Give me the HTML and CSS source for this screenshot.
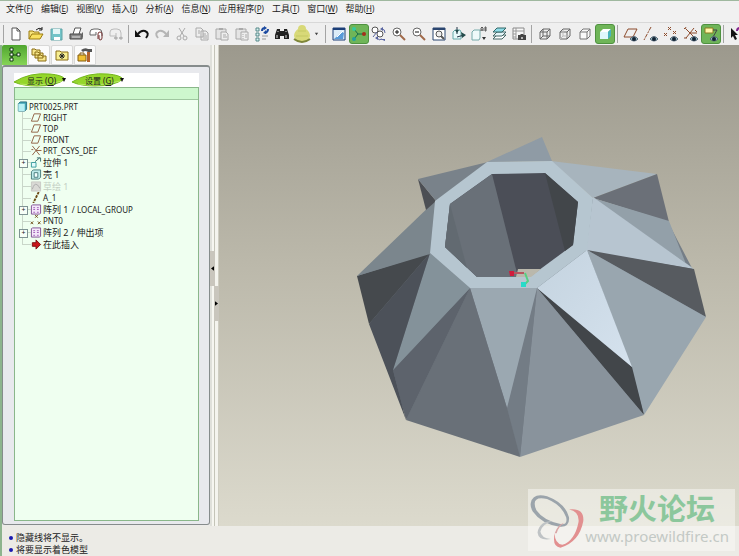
FILE: index.html
```html
<!DOCTYPE html>
<html lang="zh-CN">
<head>
  <meta charset="UTF-8">
  <meta name="viewport" content="width=device-width, initial-scale=1">
  <title>PRT0025</title>
  <link rel="stylesheet" href="styles.css">
</head>
<body>
  <nav class="menubar">
    <button>文件<span>(<u>F</u>)</span></button>
    <button>编辑<span>(<u>E</u>)</span></button>
    <button>视图<span>(<u>V</u>)</span></button>
    <button>插入<span>(<u>I</u>)</span></button>
    <button>分析<span>(<u>A</u>)</span></button>
    <button>信息<span>(<u>N</u>)</span></button>
    <button>应用程序<span>(<u>P</u>)</span></button>
    <button>工具<span>(<u>T</u>)</span></button>
    <button>窗口<span>(<u>W</u>)</span></button>
    <button>帮助<span>(<u>H</u>)</span></button>
  </nav>

  <div class="toolbar">
    <div class="group">
      <button class="tool" aria-label="新建"><svg viewBox="0 0 16 16"><path d="M4 2h5l3 3v9H4z" fill="#fff" stroke="#555"/><path d="M9 2v3h3" fill="none" stroke="#555"/></svg></button>
      <button class="tool" aria-label="打开"><svg viewBox="0 0 16 16"><path d="M1 13V5h4l1 1h5v2" fill="#f5e27a" stroke="#9a7a10"/><path d="M1 13l3-5h11l-3 5z" fill="#f8e060" stroke="#9a7a10"/><path d="M8 4q3-3 6-1m0-2v3h-3" fill="none" stroke="#222"/></svg></button>
      <button class="tool" aria-label="保存"><svg viewBox="0 0 16 16"><path d="M3 3h11v11H3z" fill="#72c4c8" stroke="#62a5a8"/><path d="M5 3h7v5H5z" fill="#e4f6f6"/><path d="M6 11h6v3H6z" fill="#fff"/></svg></button>
      <button class="tool" aria-label="打印"><svg viewBox="0 0 16 16"><path d="M5 8l2-6h6l-2 6" fill="#fff" stroke="#555"/><path d="M2 8h11l1 1v4H2z" fill="#888" stroke="#444"/><path d="M4 11h8" stroke="#ddd"/><path d="M13 8l2-2v5l-2 2" fill="#666"/></svg></button>
      <button class="tool" aria-label="发送附件"><svg viewBox="0 0 16 16"><path d="M2 9V6q0-3 4-3h4q4 0 4 4v3M2 9h6V6" fill="#fff" stroke="#666"/><path d="M10 13V8q0-2 2-2t2 2v4q0 2-2 2-1 0-1-2V9" fill="none" stroke="#733"/></svg></button>
      <button class="tool" aria-label="发送链接"><svg viewBox="0 0 16 16"><path d="M2 10V6q0-3 4-3h3q4 0 4 4v3M2 10h6V7" fill="none" stroke="#bbb"/><path d="M6 12h3m2 0h3M7 11h2v2H7zM12 11h2v2h-2z" fill="none" stroke="#aaa"/></svg></button>
    </div>
    <div class="group">
      <button class="tool" aria-label="撤消"><svg viewBox="0 0 16 16"><path d="M4 8q3-4 7-3 5 2 1 7" fill="none" stroke="#111" stroke-width="2"/><path d="M1 4v7h6z" fill="#111"/></svg></button>
      <button class="tool" aria-label="重做"><svg viewBox="0 0 16 16"><path d="M12 8Q9 4 5 5q-5 2-1 7" fill="none" stroke="#b5b5b5" stroke-width="2"/><path d="M15 4v7H9z" fill="#b5b5b5"/></svg></button>
      <button class="tool" aria-label="剪切"><svg viewBox="0 0 16 16"><path d="M5 2l5 8M11 2l-5 8" stroke="#aaa" fill="none"/><circle cx="5" cy="12" r="2" fill="none" stroke="#aaa"/><circle cx="11" cy="12" r="2" fill="none" stroke="#aaa"/></svg></button>
      <button class="tool" aria-label="复制"><svg viewBox="0 0 16 16"><path d="M2 2h5l2 2v7H2zM7 5h5l2 2v7H7z" fill="#eee" stroke="#aaa"/><path d="M9 8h3m-3 2h4m-4 2h4M4 5h2M4 7h2" stroke="#aaa"/></svg></button>
      <button class="tool" aria-label="粘贴"><svg viewBox="0 0 16 16"><path d="M2 3h10v10H2z" fill="#e4e4e4" stroke="#aaa"/><path d="M5 2h4v2H5z" fill="#aaa"/><path d="M7 6h5l2 2v6H7z" fill="#eee" stroke="#aaa"/><path d="M9 9h3m-3 2h4" stroke="#aaa"/></svg></button>
      <button class="tool" aria-label="选择性粘贴"><svg viewBox="0 0 16 16"><path d="M2 3h10v10H2z" fill="#e4e4e4" stroke="#aaa"/><path d="M5 2h4v2H5z" fill="#aaa"/><path d="M7 6h7v8H7z" fill="#eee" stroke="#aaa"/><path d="M9 8v1m0 1v1m0 1v1m2-4h2m-2 2h2" stroke="#aaa"/></svg></button>
      <button class="tool" aria-label="再生"><svg viewBox="0 0 16 16"><path d="M2 2h3v3H2zM2 7h3v3H2zM2 12h3v3H2z" fill="#d8f0f0" stroke="#588"/><path d="M8 5q0-3 3-3M14 3q0 3-3 4" fill="none" stroke="#1b49a0" stroke-width="2"/><path d="M10 0l3 2-3 2zM12 4l-3 3 3 1z" fill="#1b49a0"/><path d="M8 10h6m-6 3h4" stroke="#999"/></svg></button>
      <button class="tool" aria-label="查找"><svg viewBox="0 0 16 16"><path d="M3 3h3v2h4V3h3l2 6v4h-5v-3H6v3H1V9z" fill="#222"/><path d="M3 9v3m9-3v3M4 5v1m8-1v1" stroke="#ddd"/></svg></button>
      <button class="tool" aria-label="选择过滤"><svg class="egg" viewBox="0 0 18 20"><path d="M9 1q4 0 4 4 4 3 4 7-1 6-8 6t-8-6q0-4 4-7 0-4 4-4z" fill="#d8d978"/><path d="M5 7h8M3 12h12" stroke="#c4c962"/><path d="M1 15q8 6 16 0" fill="none" stroke="#7d8539" stroke-width="2"/></svg></button>
      <button class="more" aria-label="更多"><svg viewBox="0 0 6 4"><path d="M1 1h4L3 4z" fill="#444"/></svg></button>
    </div>
    <div class="group">
      <button class="tool" aria-label="重画"><svg viewBox="0 0 16 16"><path d="M2 2h12v12H2z" fill="#dcecf8" stroke="#1c3f78"/><path d="M2 2h12v2H2z" fill="#1c3f78"/><path d="M3 13l8-7 2 1-1 6z" fill="#5a9bd8"/><path d="M6 11l6-6" stroke="#fff"/></svg></button>
      <button class="tool on" aria-label="旋转中心"><svg viewBox="0 0 16 16"><path d="M3 3l4 5-4 5M7 8h6" fill="none" stroke="#136b4a"/><circle cx="3" cy="3" r="2" fill="#35c99d"/><circle cx="3" cy="13" r="2" fill="#22a0a0"/><circle cx="13" cy="8" r="2" fill="#a3301c"/></svg></button>
      <button class="tool" aria-label="定向模式"><svg viewBox="0 0 16 16"><circle cx="4" cy="4" r="3" fill="#fff" stroke="#555"/><circle cx="9" cy="8" r="3" fill="#fff" stroke="#555"/><path d="M6 6L2 11m9-8q3 0 3 4m-8 5q2 3 5 1" fill="none" stroke="#5763a0"/><path d="M12 1v4L9 3zM7 10v4L4 12zM9 13h5v2" fill="#5763a0"/></svg></button>
      <button class="tool" aria-label="放大"><svg viewBox="0 0 16 16"><circle cx="6" cy="6" r="4" fill="#fff" stroke="#666"/><path d="M9 9l5 5" stroke="#a06a4a" stroke-width="2"/><path d="M4 6h4M6 4v4" stroke="#111"/></svg></button>
      <button class="tool" aria-label="缩小"><svg viewBox="0 0 16 16"><circle cx="6" cy="6" r="4" fill="#fff" stroke="#666"/><path d="M9 9l5 5" stroke="#a06a4a" stroke-width="2"/><path d="M4 6h4" stroke="#111"/></svg></button>
      <button class="tool" aria-label="重新调整"><svg viewBox="0 0 16 16"><path d="M2 2h12v12H2z" fill="#fff" stroke="#2b4670"/><path d="M2 2h12v2H2z" fill="#2b4670"/><circle cx="8" cy="8" r="3" fill="#eee" stroke="#555"/><path d="M10 10l3 3" stroke="#555" stroke-width="2"/></svg></button>
      <button class="tool" aria-label="重定向"><svg viewBox="0 0 16 16"><path d="M2 6l2-2h5l1 2v7H2z" fill="#e8fafa" stroke="#6aa"/><path d="M6 1v7m0 3l7-2" stroke="#234" fill="none"/><path d="M4 4h4L6 7zM10 6l5 3-4 3z" fill="#234b4b"/></svg></button>
      <button class="tool" aria-label="已命名视图"><svg viewBox="0 0 16 16"><path d="M1 6l2-2h6v8l-1 2H1z" fill="#effafa" stroke="#7aa"/><path d="M10 5V2l1-1 1 1v3m-2-1h2M14 1h1v4h-1zM14 3h1" fill="none" stroke="#555"/><path d="M11 11h4l-2 3z" fill="#333"/></svg></button>
      <button class="tool" aria-label="层"><svg viewBox="0 0 16 16"><path d="M2 13l4-4h9l-4 4z" fill="#fff" stroke="#466"/><path d="M2 10l4-4h9l-4 4z" fill="#e4f5f8" stroke="#466"/><path d="M2 6l4-4h9l-4 4z" fill="#8fdce8" stroke="#366"/></svg></button>
      <button class="tool" aria-label="视图管理器"><svg viewBox="0 0 16 16"><path d="M2 2h11v11H2z" fill="#f7f7f7" stroke="#888"/><path d="M5 2v11M2 5h11M2 8h3m-3 3h3" stroke="#999"/><path d="M7 9h2l1-1h2l1 1h2v5H7z" fill="#444"/><circle cx="11" cy="12" r="1" fill="#ddd"/></svg></button>
    </div>
    <div class="group">
      <button class="tool" aria-label="线框"><svg viewBox="0 0 16 16"><path d="M3 6h7v7H3zM6 3h7v7H6zM3 6l3-3m4 3l3-3m-3 10l3-3M3 13l3-3" fill="none" stroke="#666"/></svg></button>
      <button class="tool" aria-label="隐藏线"><svg viewBox="0 0 16 16"><path d="M3 6h7v7H3zM3 6l3-3h7v7l-3 3m0-7l3-3" fill="none" stroke="#666"/><path d="M6 4v6h6M3 13l3-3" fill="none" stroke="#bbb"/></svg></button>
      <button class="tool" aria-label="无隐藏线"><svg viewBox="0 0 16 16"><path d="M3 6h7v7H3zM3 6l3-3h7v7l-3 3m0-7l3-3" fill="#fafafa" stroke="#777"/></svg></button>
      <button class="tool on" aria-label="着色"><svg viewBox="0 0 16 16"><path d="M3 6l3-3h8l-3 3z" fill="#fff"/><path d="M3 6h8v7H3z" fill="#dff8fa"/><path d="M11 6l3-3v7l-3 3z" fill="#49b3bd"/></svg></button>
    </div>
    <div class="group">
      <button class="tool" aria-label="基准平面开关"><svg viewBox="0 0 16 16"><path d="M1 11l4-8h9l-4 8z" fill="none" stroke="#8c4b2c"/><path class="eye-lid" d="M7 13q4-5 8 0-4 4-8 0z"/><circle class="eye" cx="11" cy="13" r="2"/></svg></button>
      <button class="tool" aria-label="基准轴开关"><svg viewBox="0 0 16 16"><path d="M8 1L1 14" stroke="#8c4b2c" stroke-dasharray="4 1 2 1"/><path class="eye-lid" d="M7 13q4-5 8 0-4 4-8 0z"/><circle class="eye" cx="11" cy="13" r="2"/></svg></button>
      <button class="tool" aria-label="基准点开关"><svg viewBox="0 0 16 16"><path d="M5 1l3 3m0-3L5 4M1 7l3 3m0-3l-3 3M10 5l3 3m0-3l-3 3" stroke="#8c4b2c"/><path class="eye-lid" d="M7 13q4-5 8 0-4 4-8 0z"/><circle class="eye" cx="11" cy="13" r="2"/></svg></button>
      <button class="tool" aria-label="坐标系开关"><svg viewBox="0 0 16 16"><path d="M3 3l8 8M11 2l-8 10M7 7h7M1 2l1 1 1-2M1 12h3M12 4l2 2" fill="none" stroke="#8c4b2c"/><path class="eye-lid" d="M7 13q4-5 8 0-4 4-8 0z"/><circle class="eye" cx="11" cy="13" r="2"/></svg></button>
      <button class="tool on" aria-label="注释开关"><svg viewBox="0 0 16 16"><path d="M2 2h8v5H2z" fill="#fff6a8" stroke="#8a7a20"/><path d="M10 4h4l-4 7" fill="none" stroke="#444"/><path class="eye-lid" d="M7 13q4-5 8 0-4 4-8 0z"/><circle class="eye" cx="11" cy="13" r="2"/></svg></button>
    </div>
    <div class="group">
      <button class="tool" aria-label="上下文帮助"><svg viewBox="0 0 16 16"><path d="M2 2v10l2-2 2 4 2-1-2-4h3z" fill="#111"/><path d="M8 5q0-3 3-3t2 3l-2 3v2m0 2v1" fill="none" stroke="#83238f" stroke-width="2"/></svg></button>
    </div>
  </div>

  <main class="workspace">
    <aside class="navigator">
      <div class="tabs">
        <button class="tab active" aria-label="模型树"><svg viewBox="0 0 16 16"><path d="M3 1h3v3H3zM3 6h3v3H3zM3 11h3v3H3zM10 6h3v3h-3z" fill="#fff" stroke="#123c10"/><path d="M6 8h4M5 4v2m0 3v2" stroke="#123c10"/></svg></button>
        <button class="tab" aria-label="文件夹浏览器"><svg viewBox="0 0 16 16"><path d="M1 2h3l1 1h4v5H1zM4 5h3l1 1h4v5H4zM7 8h3l1 1h4v5H7z" fill="#f6e68a" stroke="#8a6d14"/></svg></button>
        <button class="tab" aria-label="收藏夹"><svg viewBox="0 0 16 16"><path d="M2 4h4l1 1h7v8H2z" fill="#f8ee90" stroke="#8a6d14"/><path d="M8 6v6M5 9h6M6 7l4 4M10 7l-4 4" stroke="#222"/></svg></button>
        <button class="tab" aria-label="连接"><svg viewBox="0 0 16 16"><path d="M1 8h8v6H1z" fill="#f1c232" stroke="#845c10"/><path d="M3 8V6h4v2" fill="none" stroke="#845c10"/><path d="M4 3q4-3 7-1h4v3h-4q-3-2-5 0z" fill="#555"/><path d="M10 5h3v10h-3z" fill="#b5642c"/></svg></button>
      </div>

      <div class="panel">
        <div class="actions">
          <button class="leaf"><svg class="leaf-shape" viewBox="0 0 52 14" preserveAspectRatio="none"><path d="M0 9Q16-1 36 1q12 1 15 5-8 7-28 7Q9 13 0 9z" fill="#95d62c" stroke="#73b51c"/><path d="M6 11q20 3 42-3" fill="none" stroke="#b9ea62"/></svg><span>显示 (<u>O</u>)</span><i class="caret"></i></button>
          <button class="leaf"><svg class="leaf-shape" viewBox="0 0 52 14" preserveAspectRatio="none"><path d="M0 9Q16-1 36 1q12 1 15 5-8 7-28 7Q9 13 0 9z" fill="#95d62c" stroke="#73b51c"/><path d="M6 11q20 3 42-3" fill="none" stroke="#b9ea62"/></svg><span>设置 (<u>G</u>)</span><i class="caret"></i></button>
        </div>

        <div class="tree">
          <div class="tree-head"></div>
          <div class="tree-root"><svg viewBox="0 0 12 12"><path d="M2 3l2-2h7v8l-2 2H2z" fill="#3fa3b5" stroke="#2d6f80"/><path d="M2 3h7v8H2z" fill="#b8f0f4"/></svg>PRT0025.PRT</div>
          <ul>
            <li><svg viewBox="0 0 12 12"><path d="M1 10l3-8h7l-3 8z" fill="none" stroke="#8c5a3c"/></svg>RIGHT</li>
            <li><svg viewBox="0 0 12 12"><path d="M1 10l3-8h7l-3 8z" fill="none" stroke="#8c5a3c"/></svg>TOP</li>
            <li><svg viewBox="0 0 12 12"><path d="M1 10l3-8h7l-3 8z" fill="none" stroke="#8c5a3c"/></svg>FRONT</li>
            <li><svg viewBox="0 0 12 12"><path d="M2 1l8 10M10 1L2 11M6 6h6M1 5h2" fill="none" stroke="#8c5a3c"/></svg>PRT_CSYS_DEF</li>
            <li class="cjk node"><svg viewBox="0 0 12 12"><path d="M1 6h5v5H1z" fill="#e4fafa" stroke="#399"/><path d="M5 5l5-4M7 1h4v4" fill="none" stroke="#366"/></svg>拉伸 1</li>
            <li class="cjk"><svg viewBox="0 0 12 12"><path d="M1 3l2-2h8v8l-2 2H1z" fill="#bdeaea" stroke="#477"/><path d="M4 4h4v5H4z" fill="#f4ffff" stroke="#477"/></svg>壳 1</li>
            <li class="cjk hidden-item"><svg viewBox="0 0 12 12"><path d="M1 1h10v10H1z" fill="#d9d9d5" stroke="#c8c8c4"/><path d="M2 9q2-7 5-5t3 4" fill="none" stroke="#aaa"/></svg>草绘 1</li>
            <li><svg viewBox="0 0 12 12"><path d="M9 0L3 12" stroke="#6b4a14" stroke-width="2" stroke-dasharray="3 1"/></svg>A_1</li>
            <li class="cjk node"><svg viewBox="0 0 12 12"><path d="M1 2l1-1h9v9l-1 1H1z" fill="#f4e8fa" stroke="#7d4d91"/><path d="M3 4h2m2 0h2M3 6h2m2 0h2M3 9h2m2 0h2" stroke="#9b5ab5"/></svg>阵列 1 <small>/ LOCAL_GROUP</small></li>
            <li><svg viewBox="0 0 12 12"><path d="M5 0l3 3m0-3L5 3M0 7l3 3m0-3l-3 3M8 7l3 3m0-3l-3 3" stroke="#6b4a14"/></svg>PNT0</li>
            <li class="cjk node"><svg viewBox="0 0 12 12"><path d="M1 2l1-1h9v9l-1 1H1z" fill="#f4e8fa" stroke="#7d4d91"/><path d="M3 4h2m2 0h2M3 6h2m2 0h2M3 9h2m2 0h2" stroke="#9b5ab5"/></svg>阵列 2 / 伸出项</li>
            <li class="cjk"><svg viewBox="0 0 12 12"><path d="M2 4h4V1l5 5-5 5V8H2z" fill="#c8151b" stroke="#7c0d10"/></svg>在此插入</li>
          </ul>
        </div>
      </div>
    </aside>

    <div class="splitter">
      <button class="grip" aria-label="收起"><svg viewBox="0 0 4 6"><path d="M4 0v6L0 3z"/></svg></button>
      <button class="grip right" aria-label="展开"><svg viewBox="0 0 4 6"><path d="M0 0v6l4-3z"/></svg></button>
    </div>

    <section class="viewport">
      <svg class="model" viewBox="219 45 520 481">
        <defs>
          <linearGradient id="bright" x1="0" y1="0" x2="1" y2="1">
            <stop offset="0" stop-color="#c4d3df"/>
            <stop offset="1" stop-color="#d5e2ee"/>
          </linearGradient>
        </defs>
        <!-- body under the faces, so no seam shows through -->
        <path d="M488 163L551 162L592 199L668 222L693 270L705 317L643 414L520 456L407 419L370 323L358 276L435 202z" fill="#757e87"/>
        <!-- spikes, clockwise from the top -->
        <path d="M487 162L542 137L552 161z" fill="#8f9ba5"/>
        <path d="M551 161L657 174L593 198z" fill="#a7b4bd"/>
        <path d="M593 198L657 174L669 222z" fill="#6b7078"/>
        <path d="M593 198L669 221L686 264L694 269z" fill="#93a0a9"/>
        <path d="M593 197L694 269L586 251z" fill="#b7c5d0"/>
        <path d="M587 250L694 269L706 317z" fill="#575b60"/>
        <path d="M587 250L706 317L644 415L631 367z" fill="#99a6af"/>
        <path d="M537 288L632 367L644 415z" fill="#42464a"/>
        <path d="M537 288L587 250L632 367z" fill="url(#bright)"/>
        <path d="M537 288L644 415L520 457z" fill="#89939c"/>
        <path d="M537 288L507 408L520 457z" fill="#737c85"/>
        <path d="M470 288H537L507 408z" fill="#9ba8b1"/>
        <path d="M470 288L507 408L520 457L406 420z" fill="#697078"/>
        <path d="M470 288L393 370L406 420z" fill="#5d636c"/>
        <path d="M430 253L470 288L393 370z" fill="#84929a"/>
        <path d="M430 253L369 324L406 420L393 370z" fill="#4c5159"/>
        <path d="M430 253L357 276L369 324z" fill="#45494d"/>
        <path d="M435 201L430 254L357 276z" fill="#7b868d"/>
        <path d="M418 179L436 201L426 210z" fill="#4c4f54"/>
        <path d="M488 162L418 179L436 201z" fill="#79828a"/>
        <!-- rim and the hole -->
        <path d="M487 162L552 161L593 198L587 250L537 288H470L430 253L435 201z" fill="#b6c6d0"/>
        <path d="M492 174L545 173L578 202L573 245L531 276L477 277L445 247L450 204z" fill="#4b4e57"/>
        <path d="M492 174L518 277H477L445 247L450 204z" fill="#697078"/>
        <path d="M450 204L467 268L445 247z" fill="#626a71"/>
        <path d="M545 173L578 202L573 245L565 251z" fill="#42464a"/>
        <!-- spin center -->
        <path d="M518 269H541L531 277H516z" fill="#bab8ac"/>
        <path d="M514 273h10" stroke="#b85560" stroke-width="2"/>
        <path d="M509 271h5v5h-4z" fill="#d01c3c"/>
        <path d="M525 273l3 8-4 4" fill="none" stroke="#56cf83" stroke-width="2"/>
        <path d="M521 282h5v5h-5z" fill="#27dbc9"/>
      </svg>
    </section>
  </main>

  <footer class="messages">
    <p>隐藏线将不显示。</p>
    <p>将要显示着色模型</p>
  </footer>

  <div class="watermark">
    <svg viewBox="0 0 60 60">
      <g fill-rule="evenodd">
        <path d="M3 12Q5 1 20 5 39 12 43 27 44 38 33 37 14 34 5 21 2 16 3 12zM7 13q0-8 13-5 15 6 20 19 2 9-7 7Q16 30 9 20q-2-4-2-7z" fill="#9ba4ab"/>
        <path d="M26 31Q12 31 10 43q1 9 14 7-10-1-11-8 2-8 13-11z" fill="#bfc3c5"/>
        <path d="M43 19q16-2 15 12-4 22-24 28-9-1-6-15 0 11 8 12 13-4 17-24 1-11-10-13z" fill="#e29090"/>
        <path d="M28 44q3-9 10-11-6 4-8 11z" fill="#d9a5a5"/>
      </g>
    </svg>
    <div class="brand">
      <strong>野火论坛</strong>
      <a href="http://www.proewildfire.cn">www.proewildfire.cn</a>
    </div>
  </div>
</body>
</html>
```
FILE: styles.css
```css
* {
  box-sizing: border-box;
}

body {
  margin: 0;
  height: 100vh;
  display: flex;
  flex-direction: column;
  overflow: hidden;
  position: relative;
  font-family: "Noto Sans", "Noto Sans CJK SC", sans-serif;
  font-size: 9px;
  color: #222;
  background: #ecebe6;
  border-top: 1px solid #9fb89f;
}

button {
  margin: 0;
  padding: 0;
  border: 0;
  background: none;
  font: inherit;
  color: inherit;
}

svg {
  display: block;
}

/* menu */
.menubar {
  height: 22px;
  flex: none;
  display: flex;
  align-items: flex-start;
  gap: 8px;
  padding: 1px 6px;
  background: #f1f1f1;
  border-bottom: 1px solid #d8d8d8;
}

.menubar button {
  flex: none;
  height: 13px;
  line-height: 13px;
  white-space: nowrap;
}

.menubar span {
  font-size: 8px;
}

/* toolbar */
.toolbar {
  flex: none;
  display: flex;
  height: 22px;
  padding-left: 3px;
  overflow: hidden;
  background: #efefef;
}

.group {
  flex: none;
  display: flex;
  align-items: center;
}

.group::before {
  content: "";
  width: 1px;
  height: 18px;
  margin: 0 3px 0 2px;
  background: #a4a4a4;
}

.group:first-child::before {
  margin: 0 2px 0 0;
}

.tool {
  width: 20px;
  height: 20px;
  display: flex;
  align-items: center;
  justify-content: center;
  border-radius: 3px;
}

.tool svg {
  width: 16px;
  height: 16px;
}

.tool .egg {
  width: 18px;
  height: 20px;
}

.tool.on {
  background: #6fb558;
  border: 1px solid #4f9140;
}

.more {
  width: 11px;
  padding-left: 2px;
}

.more svg {
  width: 5px;
}

.eye-lid {
  fill: #9fc4c8;
  stroke: #567;
}

.eye {
  fill: #123;
}

/* navigator */
.workspace {
  flex: 1;
  min-height: 0;
  display: flex;
}

.navigator {
  width: 210px;
  flex: none;
  display: flex;
  flex-direction: column;
  padding-bottom: 1px;
  border-left: 2px solid #8db48d;
  background: #ecebe9;
}

.tabs {
  display: flex;
  gap: 1px;
}

.tab {
  width: 22px;
  height: 20px;
  display: flex;
  align-items: center;
  justify-content: center;
  background: #fbfbfb;
  border: 1px solid #d8d8d8;
  border-radius: 2px 2px 0 0;
}

.tab.active {
  width: 25px;
  background: linear-gradient(#4fa52f, #86d456);
  border: 0;
}

.tab svg {
  width: 16px;
  height: 16px;
}

.panel {
  flex: 1;
  display: flex;
  flex-direction: column;
  padding: 6px 10px 3px 11px;
  background: #e8e9ed;
  border: 1px solid #868c8c;
  border-top-width: 2px;
  border-radius: 3px;
}

.actions {
  display: flex;
  gap: 6px;
  height: 14px;
  background: #fff;
}

.leaf {
  width: 52px;
  height: 14px;
  position: relative;
  display: flex;
  align-items: center;
  padding-left: 13px;
  white-space: nowrap;
}

.leaf span {
  position: relative;
  flex: 1;
  text-align: left;
  font-size: 8px;
}

.leaf-shape {
  position: absolute;
  left: 0;
  top: 0;
  width: 100%;
  height: 100%;
}

.caret {
  position: relative;
  border: 2px solid transparent;
  border-top: 4px solid #111;
  border-bottom: 0;
}

/* model tree */
.tree {
  flex: 1;
  background: #effff0;
  border: 1px solid #8ab78a;
  font-size: 8px;
}

.tree-head {
  height: 12px;
  background: #cdf7cd;
  border-bottom: 1px solid #9fc79f;
}

.tree svg {
  width: 12px;
  height: 11px;
  flex: none;
}

.tree-root {
  display: flex;
  align-items: center;
  gap: 1px;
  height: 12px;
  padding-left: 1px;
}

.tree ul {
  list-style: none;
  margin: 0;
  padding: 0 0 0 7px;
}

.tree li {
  position: relative;
  display: flex;
  align-items: center;
  gap: 1px;
  height: 11px;
  padding-left: 8px;
  line-height: 11px;
  white-space: pre;
}

.tree li.cjk {
  height: 12px;
  font-size: 9px;
}

.tree small {
  font-size: 8px;
}

/* branch lines */
.tree li::before {
  content: "";
  position: absolute;
  left: 0;
  top: 0;
  width: 8px;
  height: 6px;
  border-left: 1px solid #c9d6c9;
  border-bottom: 1px solid #c9d6c9;
}

.tree li:not(:last-child)::after {
  content: "";
  position: absolute;
  left: 0;
  top: 6px;
  bottom: 0;
  border-left: 1px solid #c9d6c9;
}

.tree li.node::after {
  content: "+";
  left: -3px;
  top: 3px;
  width: 7px;
  height: 7px;
  border: 1px solid #7f9494;
  background: #f7fff7;
  font-size: 7px;
  line-height: 5px;
  text-align: center;
}

.tree li.hidden-item {
  color: #c3cfc3;
}

/* splitter */
.splitter {
  width: 9px;
  flex: none;
  display: flex;
  flex-direction: column;
  justify-content: center;
  background: linear-gradient(90deg, #dfe0da 2px, #f6f6f0 2px 4px, #c4c4b8 4px 5px, #f4f4ee 5px 8px, #cfcec2 8px);
}

.grip {
  width: 5px;
  height: 35px;
  display: flex;
  align-items: center;
  justify-content: center;
  background: #c9c6bd;
}

.grip.right {
  align-self: flex-end;
}

.grip svg {
  width: 3px;
  height: 5px;
}

/* 3d view */
.viewport {
  flex: 1;
  min-width: 0;
  background: linear-gradient(#9c998d, #bbb8aa 45%, #dcdacd);
}

.model {
  width: 100%;
  height: 100%;
}

/* messages */
.messages {
  height: 30px;
  flex: none;
  padding: 6px 0 0 7px;
  border-left: 2px solid #8db48d;
}

.messages p {
  margin: 0;
  height: 12px;
  line-height: 12px;
  display: flex;
  align-items: center;
  gap: 3px;
}

.messages p::before {
  content: "";
  width: 4px;
  height: 4px;
  border-radius: 50%;
  background: #1a1ab0;
}

.watermark {
  position: absolute;
  right: 4px;
  bottom: 5px;
  display: flex;
  align-items: center;
  width: 207px;
  height: 62px;
  background: rgba(250, 249, 246, 0.5);
}

.watermark svg {
  width: 60px;
  height: 60px;
}

.brand {
  flex: 1;
  padding-right: 6px;
  display: flex;
  flex-direction: column;
  align-items: center;
}

.brand strong {
  font-size: 29px;
  line-height: 32px;
  color: #8cc79c;
}

.brand a {
  font-size: 15px;
  line-height: 22px;
  color: #c3c9c5;
  text-decoration: none;
}
```
